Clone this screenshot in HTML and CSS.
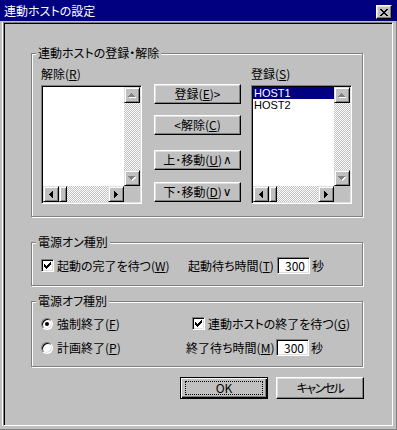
FILE: index.html
```html
<!DOCTYPE html>
<html lang="ja">
<head>
  <meta charset="UTF-8" />
  <title>連動ホストの設定</title>
  <link rel="stylesheet" href="styles.css">
</head>
<body>
  <div class="window">
    <div class="titlebar">
      <span class="title">連動ホストの設定</span>
      <span class="close-btn">
        <svg width="8" height="7" viewBox="0 0 8 7" shape-rendering="crispEdges"><path d="M0 0h2v1h-2zM6 0h2v1h-2zM1 1h2v1h-2zM5 1h2v1h-2zM2 2h4v1h-4zM3 3h2v1h-2zM2 4h4v1h-4zM1 5h2v1h-2zM5 5h2v1h-2zM0 6h2v1h-2zM6 6h2v1h-2z" fill="#000"/></svg>
      </span>
    </div>

    <div class="client">
      <!-- 連動ホスト -->
      <div class="group group-hosts">
        <span class="legend">連動ホストの登録・解除</span>
        <div class="host-col">
          <div class="label">解除(<u>R</u>)</div>
          <div class="listbox">
            <div class="list-items"></div>
            <div class="vscroll">
              <span class="sb-btn"><svg width="8" height="5" viewBox="0 0 8 5" shape-rendering="crispEdges"><path transform="translate(1 1)" d="M3 0h1v1h-1zM2 1h3v1h-3zM1 2h5v1h-5zM0 3h7v1h-7z" fill="#fff"/><path d="M3 0h1v1h-1zM2 1h3v1h-3zM1 2h5v1h-5zM0 3h7v1h-7z" fill="#808080"/></svg></span>
              <span class="sb-track"></span>
              <span class="sb-btn"><svg width="8" height="5" viewBox="0 0 8 5" shape-rendering="crispEdges"><path transform="translate(1 1)" d="M0 0h7v1h-7zM1 1h5v1h-5zM2 2h3v1h-3zM3 3h1v1h-1z" fill="#fff"/><path d="M0 0h7v1h-7zM1 1h5v1h-5zM2 2h3v1h-3zM3 3h1v1h-1z" fill="#808080"/></svg></span>
            </div>
            <div class="hscroll">
              <span class="sb-btn"><svg width="4" height="7" viewBox="0 0 4 7" shape-rendering="crispEdges"><path d="M0 3h1v1h-1zM1 2h1v3h-1zM2 1h1v5h-1zM3 0h1v7h-1z" fill="#000"/></svg></span>
              <span class="sb-thumb"></span>
              <span class="sb-track"></span>
              <span class="sb-btn"><svg width="4" height="7" viewBox="0 0 4 7" shape-rendering="crispEdges"><path d="M3 3h1v1h-1zM2 2h1v3h-1zM1 1h1v5h-1zM0 0h1v7h-1z" fill="#000"/></svg></span>
            </div>
            <div class="sb-corner"></div>
          </div>
        </div>

        <div class="btn-col">
          <div class="btn-pair">
            <button class="btn">登録(<u>E</u>)&gt;</button>
            <button class="btn">&lt;解除(<u>C</u>)</button>
          </div>
          <div class="btn-pair move">
            <button class="btn">上･移動(<u>U</u>)<span class="sym">∧</span></button>
            <button class="btn">下･移動(<u>D</u>)<span class="sym">∨</span></button>
          </div>
        </div>

        <div class="host-col right">
          <div class="label">登録(<u>S</u>)</div>
          <div class="listbox">
            <div class="list-items">
              <div class="item selected">HOST1</div>
              <div class="item">HOST2</div>
            </div>
            <div class="vscroll">
              <span class="sb-btn"><svg width="8" height="5" viewBox="0 0 8 5" shape-rendering="crispEdges"><path transform="translate(1 1)" d="M3 0h1v1h-1zM2 1h3v1h-3zM1 2h5v1h-5zM0 3h7v1h-7z" fill="#fff"/><path d="M3 0h1v1h-1zM2 1h3v1h-3zM1 2h5v1h-5zM0 3h7v1h-7z" fill="#808080"/></svg></span>
              <span class="sb-track"></span>
              <span class="sb-btn"><svg width="8" height="5" viewBox="0 0 8 5" shape-rendering="crispEdges"><path transform="translate(1 1)" d="M0 0h7v1h-7zM1 1h5v1h-5zM2 2h3v1h-3zM3 3h1v1h-1z" fill="#fff"/><path d="M0 0h7v1h-7zM1 1h5v1h-5zM2 2h3v1h-3zM3 3h1v1h-1z" fill="#808080"/></svg></span>
            </div>
            <div class="hscroll">
              <span class="sb-btn"><svg width="4" height="7" viewBox="0 0 4 7" shape-rendering="crispEdges"><path d="M0 3h1v1h-1zM1 2h1v3h-1zM2 1h1v5h-1zM3 0h1v7h-1z" fill="#000"/></svg></span>
              <span class="sb-thumb"></span>
              <span class="sb-track"></span>
              <span class="sb-btn"><svg width="4" height="7" viewBox="0 0 4 7" shape-rendering="crispEdges"><path d="M3 3h1v1h-1zM2 2h1v3h-1zM1 1h1v5h-1zM0 0h1v7h-1z" fill="#000"/></svg></span>
            </div>
            <div class="sb-corner"></div>
          </div>
        </div>
      </div>

      <!-- 電源オン -->
      <div class="group group-on">
        <span class="legend">電源オン種別</span>
        <div class="row">
          <label class="check-field wide">
            <span class="checkbox"><svg width="7" height="7" viewBox="0 0 7 7" shape-rendering="crispEdges"><path d="M0 2h1v3h-1zM1 3h1v3h-1zM2 4h1v3h-1zM3 3h1v3h-1zM4 2h1v3h-1zM5 1h1v3h-1zM6 0h1v3h-1z" fill="#000"/></svg></span>
            <span>起動の完了を待つ(<u>W</u>)</span>
          </label>
          <span class="time-label">起動待ち時間(<u>T</u>)</span>
          <input class="num-input" type="text" value="300">
          <span class="unit">秒</span>
        </div>
      </div>

      <!-- 電源オフ -->
      <div class="group group-off">
        <span class="legend">電源オフ種別</span>
        <div class="off-grid">
          <label class="check-field">
            <span class="radio checked"><span class="dot"></span></span>
            <span>強制終了(<u>F</u>)</span>
          </label>
          <label class="check-field indent">
            <span class="checkbox"><svg width="7" height="7" viewBox="0 0 7 7" shape-rendering="crispEdges"><path d="M0 2h1v3h-1zM1 3h1v3h-1zM2 4h1v3h-1zM3 3h1v3h-1zM4 2h1v3h-1zM5 1h1v3h-1zM6 0h1v3h-1z" fill="#000"/></svg></span>
            <span>連動ホストの終了を待つ(<u>G</u>)</span>
          </label>
          <label class="check-field">
            <span class="radio"></span>
            <span>計画終了(<u>P</u>)</span>
          </label>
          <div class="row">
            <span class="time-label">終了待ち時間(<u>M</u>)</span>
            <input class="num-input" type="text" value="300">
            <span class="unit">秒</span>
          </div>
        </div>
      </div>

      <div class="dialog-buttons">
        <button class="btn btn-default"><span class="focus">OK</span></button>
        <button class="btn btn-cancel">キャンセル</button>
      </div>
    </div>
  </div>
</body>
</html>
```

FILE: styles.css
```css
body { margin: 0; font-family: "Noto Sans CJK JP", sans-serif; font-size: 12px; color: #000; font-feature-settings: "palt"; }
u { text-underline-offset: 1px; }

.window { width: 397px; height: 430px; background: #c0c0c0; box-shadow: inset -1px -1px #808080; overflow: hidden; }

.titlebar { height: 21px; background: #000080; color: #fff; display: flex; justify-content: space-between; align-items: flex-start; padding: 0 5px 0 4px; }
.title { line-height: 21px; }
.close-btn { width: 16px; height: 14px; margin-top: 5px; box-sizing: border-box; background: #c0c0c0; border: 1px solid; border-color: #fff #000 #000 #fff; box-shadow: inset -1px -1px #808080, inset 1px 1px #dfdfdf; display: flex; align-items: center; justify-content: center; padding-right: 1px; }

.client { margin: 1px 0 0 3px; width: 390px; height: 404px; box-sizing: border-box; border: 1px solid; border-color: #808080 #fff #fff #808080; box-shadow: inset 1px 1px #000, -1px 0 #fff; padding: 30px 0 0 27px; }

.group { position: relative; width: 332px; box-sizing: border-box; border: 1px solid #808080; box-shadow: 1px 1px #fff, inset 1px 1px #fff; }
.legend { position: absolute; left: 4px; top: -9px; padding: 0 2px; background: #c0c0c0; line-height: 16px; white-space: nowrap; }

/* 連動ホスト */
.group-hosts { display: flex; height: 164px; padding: 12px 0 0 9px; }
.host-col { width: 101px; }
.host-col.right { margin-left: 10px; }
.label { line-height: 16px; height: 16px; margin-bottom: 3px; }

.listbox { width: 101px; height: 119px; box-sizing: border-box; background: #fff; border: 1px solid; border-color: #808080 #fff #fff #808080; box-shadow: inset 1px 1px #000, inset -1px -1px #dfdfdf; padding: 1px; display: grid; grid-template-columns: 1fr 16px; grid-template-rows: 1fr 16px; }
.list-items { overflow: hidden; }
.item { height: 12px; line-height: 12px; font-family: "Liberation Sans", sans-serif; font-size: 11px; padding-left: 1px; overflow: hidden; }
.item.selected { background: #000080; color: #fff; }

.vscroll { display: flex; flex-direction: column; }
.hscroll { display: flex; }
.sb-btn { width: 16px; height: 16px; flex: none; box-sizing: border-box; background: #c0c0c0; border: 1px solid; border-color: #dfdfdf #000 #000 #dfdfdf; box-shadow: inset 1px 1px #fff, inset -1px -1px #808080; display: flex; align-items: center; justify-content: center; }
.sb-btn svg { display: block; }
.sb-track { flex: 1; background: repeating-conic-gradient(#fff 0 25%, #c0c0c0 0 50%) 0 0 / 2px 2px; }
.sb-thumb { width: 8px; flex: none; box-sizing: border-box; background: #c0c0c0; border: 1px solid; border-color: #dfdfdf #000 #000 #dfdfdf; box-shadow: inset 1px 1px #fff, inset -1px -1px #808080; }
.sb-corner { background: #c0c0c0; }

.btn-col { width: 87px; margin: 18px 0 0 12px; }
.btn-pair { display: flex; flex-direction: column; gap: 11px; }
.btn-pair.move { gap: 12px; margin-top: 15px; }
.sym { font-family: "DejaVu Sans", sans-serif; font-size: 12px; margin-left: 1px; }

.btn { width: 87px; height: 20px; box-sizing: border-box; padding: 0; font: inherit; color: #000; background: #c0c0c0; border: 1px solid; border-color: #fff #000 #000 #fff; box-shadow: inset -1px -1px #808080, inset 1px 1px #dfdfdf; display: flex; align-items: center; justify-content: center; line-height: 14px; }
.btn-cancel { letter-spacing: -1.5px; }

/* 電源オン / オフ */
.group-on { height: 44px; margin-top: 25px; padding: 14px 0 0 9px; }
.group-off { height: 66px; margin-top: 15px; padding: 13px 0 0 9px; }

.row { display: flex; align-items: center; height: 17px; }
.check-field { display: flex; align-items: center; gap: 3px; height: 17px; }
.check-field.wide { width: 147px; }
.check-field.indent { margin-left: 6px; }
.time-label { width: 90px; white-space: nowrap; }
.group-on .time-label { width: 89px; }
.unit { margin-left: 2px; }

.off-grid { display: grid; grid-template-columns: 145px auto; row-gap: 7px; }

.checkbox { width: 13px; height: 13px; flex: none; box-sizing: border-box; background: #fff; border: 1px solid; border-color: #808080 #fff #fff #808080; box-shadow: inset 1px 1px #000, inset -1px -1px #dfdfdf; display: flex; align-items: center; justify-content: center; }
.checkbox svg { display: block; }

.radio { width: 12px; height: 12px; flex: none; box-sizing: border-box; border-radius: 50%; background: #fff; border: 1px solid; border-color: #808080 #fff #fff #808080; box-shadow: inset 1px 1px #000, inset -1px -1px #dfdfdf; display: flex; align-items: center; justify-content: center; margin-right: 1px; }
.radio .dot { width: 4px; height: 4px; border-radius: 50%; background: #000; }

.num-input { width: 33px; height: 17px; box-sizing: border-box; margin: 0; padding: 0 4px 0 0; font: inherit; text-align: right; background: #fff; border: 1px solid; border-color: #808080 #fff #fff #808080; box-shadow: inset 1px 1px #000, inset -1px -1px #dfdfdf; outline: none; }

.dialog-buttons { display: flex; gap: 8px; margin: 10px 0 0 149px; }
.dialog-buttons .btn { width: 88px; height: 22px; }
.btn-default { border: 1px solid #000; box-shadow: inset 1px 1px #fff, inset -1px -1px #000, inset -2px -2px #808080; padding: 3px 4px 3px 4px; }
.btn-default .focus { display: flex; align-items: center; justify-content: center; width: 100%; height: 100%; box-sizing: border-box; border: 1px dotted #000; }
```
